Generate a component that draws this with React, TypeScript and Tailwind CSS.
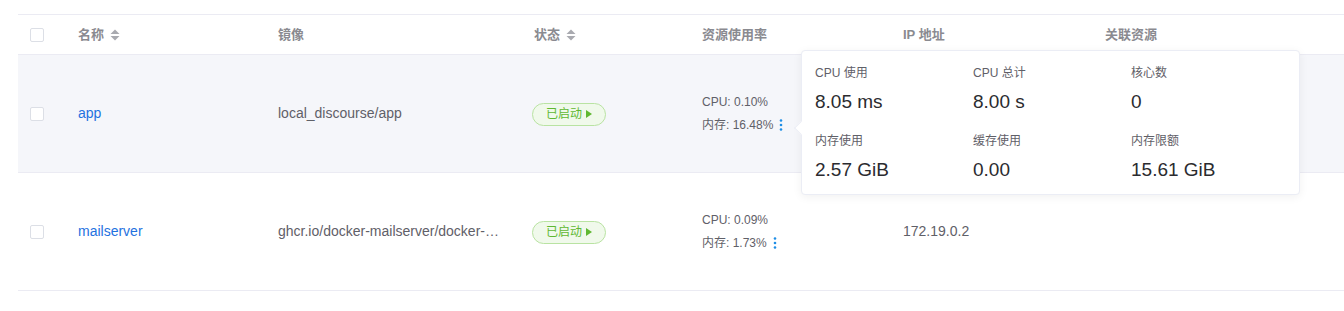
import React from "react";

const font = { fontFamily: '"Liberation Sans", Arial, "Noto Sans CJK SC", sans-serif' };

function SortIcon() {
  return (
    <svg width="10" height="12" viewBox="0 0 10 12" className="ml-[6px]">
      <path d="M5 0.5 L9.5 5 L0.5 5 Z" fill="#a9aab0" />
      <path d="M5 11.5 L9.5 7 L0.5 7 Z" fill="#a9aab0" />
    </svg>
  );
}

function Checkbox() {
  return <div className="w-[14px] h-[14px] border border-[#dcdfe6] rounded-[2px] bg-white" />;
}

function Tag() {
  return (
    <div className="inline-flex items-center h-[23px] px-[13px] rounded-full border border-[#b9e3a2] bg-[#f0f9eb] text-[12px] text-[#5fb832]">
      <span>已启动</span>
      <svg width="6" height="8" viewBox="0 0 6 8" className="ml-[4px]">
        <path d="M0 0 L6 4 L0 8 Z" fill="#5fb832" />
      </svg>
    </div>
  );
}

function Dots() {
  return (
    <svg width="4" height="12" viewBox="0 0 4 12" className="ml-[6px]">
      <circle cx="2" cy="1.5" r="1.3" fill="#1e8ee6" />
      <circle cx="2" cy="6" r="1.3" fill="#1e8ee6" />
      <circle cx="2" cy="10.5" r="1.3" fill="#1e8ee6" />
    </svg>
  );
}

const grid = "grid grid-cols-[48px_200px_254px_170px_201px_202px_1fr]";

function Row({ name, image, cpu, mem, ip, bg }: { name: string; image: string; cpu: string; mem: string; ip: string; bg: string }) {
  return (
    <div className={`${grid} h-[118px] items-center border-b border-[#ebebf3] ${bg}`}>
      <div className="pl-[12px]"><Checkbox /></div>
      <div className="pl-[12px] text-[14px] text-[#1f72e0]">{name}</div>
      <div className="pl-[12px] pr-[20px] text-[14px] text-[#5f6068] truncate">{image}</div>
      <div className="pl-[12px]"><Tag /></div>
      <div className="pl-[12px] text-[12px] text-[#5f6068] leading-[23px]">
        <div>CPU: {cpu}</div>
        <div className="flex items-center">内存: {mem}<Dots /></div>
      </div>
      <div className="pl-[12px] text-[14px] text-[#5f6068]">{ip}</div>
      <div />
    </div>
  );
}

function Stat({ label, value }: { label: string; value: string }) {
  return (
    <div>
      <div className="text-[12px] text-[#5f6068] leading-[16px]">{label}</div>
      <div className="text-[19px] text-[#2b2b2f] leading-[24px] mt-[9px]">{value}</div>
    </div>
  );
}

export default function App() {
  return (
    <div style={font} className="w-[1344px] h-[311px] bg-white overflow-hidden pt-[14px] pl-[18px]">
      <div className="relative w-[1326px]">
        <div className={`${grid} h-[41px] items-center border-t border-b border-[#ebebf3] text-[13px] font-bold text-[#8a8a90]`}>
          <div className="pl-[12px]"><Checkbox /></div>
          <div className="pl-[12px] flex items-center">名称<SortIcon /></div>
          <div className="pl-[12px]">镜像</div>
          <div className="pl-[14px] flex items-center">状态<SortIcon /></div>
          <div className="pl-[12px]">资源使用率</div>
          <div className="pl-[12px]">IP 地址</div>
          <div className="pl-[12px]">关联资源</div>
        </div>
        <Row name="app" image="local_discourse/app" cpu="0.10%" mem="16.48%" ip="" bg="bg-[#f5f6fa]" />
        <Row name="mailserver" image="ghcr.io/docker-mailserver/docker-mailserver" cpu="0.09%" mem="1.73%" ip="172.19.0.2" bg="bg-white" />

        <div className="absolute left-[783px] top-[36px] w-[499px] h-[145px] bg-white border border-[#ebedf5] rounded-[4px] shadow-[0_2px_10px_rgba(0,0,0,0.06)] pl-[13px] pt-[14px]">
          <div className="absolute left-[-6px] top-[72px] w-[10px] h-[10px] bg-white border-l border-b border-[#ebedf5] rotate-45" />
          <div className="grid grid-cols-[158px_158px_158px] gap-y-[19px]">
            <Stat label="CPU 使用" value="8.05 ms" />
            <Stat label="CPU 总计" value="8.00 s" />
            <Stat label="核心数" value="0" />
            <Stat label="内存使用" value="2.57 GiB" />
            <Stat label="缓存使用" value="0.00" />
            <Stat label="内存限额" value="15.61 GiB" />
          </div>
        </div>
      </div>
    </div>
  );
}
